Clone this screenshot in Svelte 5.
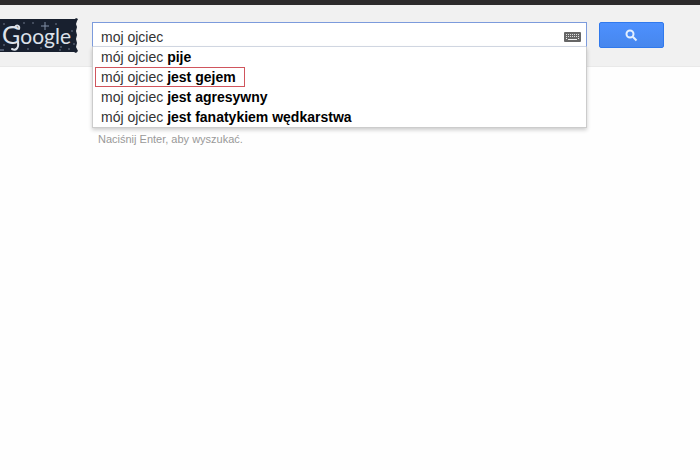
<script>
  let query = 'moj ojciec';

  const suggestions = [
    { typed: 'mój ojciec', rest: 'pije' },
    { typed: 'mój ojciec', rest: 'jest gejem', marked: true },
    { typed: 'moj ojciec', rest: 'jest agresywny' },
    { typed: 'mój ojciec', rest: 'jest fanatykiem wędkarstwa' }
  ];

  const stars = [
    [4, 6], [24, 5], [33, 5], [56, 6], [72, 13], [4, 27], [28, 31],
    [41, 30], [61, 29], [60, 32], [69, 31], [74, 26]
  ];
</script>

<div class="topbar"></div>

<header>
  <a class="logo" href="/" aria-label="Google">
    <svg width="79" height="36" viewBox="0 0 79 36">
      <path class="sky" d="M0 1H75L76 0L78 1L77 3L76 6L77 9L76 13L77 17L76 21L77 25L76 29L78 33L76 35L74 34H0Z" />
      {#each stars as [x, y]}
        <circle class="star" cx={x} cy={y} r="0.7" />
      {/each}
      <path class="twinkle" d="M45 4V12M41 8H49" />
      <path class="twinkle" d="M0 32H4" />
      <text class="wordmark" x="2" y="26"><tspan class="big">G</tspan>oogle</text>
      <path class="curl" d="M19 11C20 8 17 6 15 9M18 24C19 30 16 33 12 31" />
    </svg>
  </a>

  <form class="search" role="search" on:submit|preventDefault>
    <div class="box">
      <input type="text" name="q" aria-label="Szukaj" autocomplete="off" bind:value={query}>
      <button class="keyboard" type="button" aria-label="Klawiatura">
        <svg width="17" height="10" viewBox="0 0 17 10">
          <rect width="17" height="10" rx="1" fill="#666" />
          <path d="M2 2.5H15M2 4.5H15" stroke="#ddd" stroke-dasharray="1 1" />
          <path d="M2 6.5H3M14 6.5H15M4 7.5H13" stroke="#eee" />
        </svg>
      </button>

      <div class="dropdown">
        <ul>
          {#each suggestions as item}
            <li><a href="/search?q={item.typed} {item.rest}" class:marked={item.marked}>{item.typed} <b>{item.rest}</b></a></li>
          {/each}
        </ul>
      </div>
    </div>

    <button class="submit" type="submit" aria-label="Szukaj w Google">
      <svg width="13" height="13" viewBox="0 0 13 13">
        <circle cx="5" cy="5" r="3.5" />
        <path d="M7.8 7.8L11.5 11.5" />
      </svg>
    </button>
  </form>
</header>

<main>
  <p>Naciśnij Enter, aby wyszukać.</p>
</main>

<style>
  :global(body) {
    background: #fefefe;
    font-family: "Liberation Sans", Arial, sans-serif;
  }

  .topbar {
    height: 5px;
    background: #2d2b2c;
  }

  header {
    display: flex;
    align-items: flex-start;
    height: 62px;
    padding-right: 36px;
    box-sizing: border-box;
    background: #f1f1f1;
    border-bottom: 1px solid #e9e9e9;
  }

  .logo {
    flex: none;
    margin: 13px 13px 0 0;
    line-height: 0;
  }

  .sky {
    fill: #18202f;
  }

  .star {
    fill: #8e9aac;
  }

  .twinkle {
    fill: none;
    stroke: #8290a8;
    stroke-width: 1;
  }

  .wordmark {
    font-family: Lato, sans-serif;
    font-size: 21px;
    fill: #dde2ea;
  }

  .big {
    font-size: 25px;
  }

  .curl {
    fill: none;
    stroke: #dde2ea;
    stroke-width: 2;
    stroke-linecap: round;
  }

  .search {
    display: flex;
    flex: 1;
    gap: 12px;
    margin-top: 17px;
  }

  .box {
    position: relative;
    display: flex;
    align-items: center;
    flex: 1;
    height: 25px;
    box-sizing: border-box;
    background: #fff;
    border: 1px solid #7c9bdc;
    border-bottom-color: #d5dbe6;
  }

  input {
    flex: 1;
    min-width: 0;
    height: 23px;
    padding: 4px 8px 0;
    box-sizing: border-box;
    border: 0;
    outline: 0;
    background: none;
    color: #333;
    font: 14px "Liberation Sans", Arial, sans-serif;
  }

  .keyboard {
    padding: 4px 5px 0;
    border: 0;
    background: none;
    line-height: 0;
  }

  .dropdown {
    position: absolute;
    top: calc(100% + 1px);
    left: -1px;
    right: -1px;
    background: #fff;
    border: 1px solid #ccc;
    border-top: 0;
    box-shadow: 0 2px 4px rgba(0, 0, 0, 0.2);
  }

  ul {
    margin: 0;
    padding: 0 2px;
    list-style: none;
  }

  li {
    font-size: 14px;
  }

  li a {
    display: inline-block;
    padding: 1px 9px 0 6px;
    color: #333;
    line-height: 19px;
    text-decoration: none;
    vertical-align: top;
  }

  li b {
    color: #000;
  }

  .marked {
    outline: 1px solid #d0555d;
    outline-offset: -1px;
  }

  .submit {
    width: 65px;
    height: 26px;
    padding: 0;
    border: 1px solid #3079ed;
    border-radius: 2px;
    background: linear-gradient(#4d90fe, #4787ed);
    line-height: 0;
  }

  .submit svg {
    fill: none;
    stroke: #e4f0ff;
    stroke-width: 2;
  }

  main p {
    margin: 63px 0 0 98px;
    color: #999;
    font-size: 11px;
    line-height: 18px;
  }
</style>
